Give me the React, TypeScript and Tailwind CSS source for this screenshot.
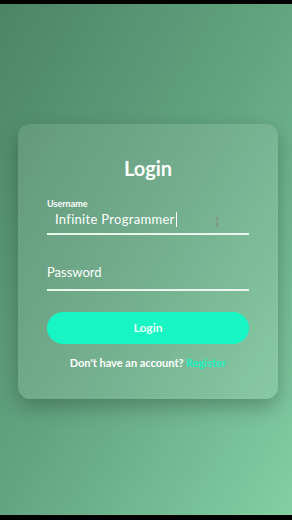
export default function App() {
  return (
    <div className="flex h-[520px] w-[292px] flex-col bg-black" style={{ fontFamily: 'Lato, "Open Sans", sans-serif' }}>
      <div className="h-[4px] shrink-0" />
      <div className="relative flex flex-1 flex-col bg-gradient-to-br from-[#4b8566] via-[#63a581] to-[#84cfa4] pt-[120px]">
        {/* Login card */}
        <div className="ml-[18px] h-[275px] w-[260px] rounded-[12px] bg-white/10 px-[29px] pt-[32px] shadow-[0_8px_20px_rgba(0,0,0,0.25)]">
          <h1 className="text-center text-[20px] font-bold leading-[24px] text-white">Login</h1>

          <div className="relative mt-[18px]">
            <div className="text-[9px] font-bold leading-[12px] text-white">Username</div>
            <div className="flex items-center border-b-2 border-[#e8f6ee] pb-[5px] pl-[8px]">
              <span className="text-[13px] leading-[18px] tracking-[0.3px] text-white">Infinite Programmer</span>
              <span className="ml-[1px] h-[15px] w-[1px] bg-white" />
            </div>
            <svg className="absolute left-[167px] top-[19px]" width="6" height="10" viewBox="0 0 6 10">
              <path d="M1 1h4M3 1v8M1 9h4" stroke="#7b8c84" strokeWidth="1" fill="none" />
            </svg>
          </div>

          <div className="mt-[24px] border-b-2 border-[#e8f6ee] pb-[6px]">
            <span className="text-[13px] leading-[18px] text-white">Password</span>
          </div>

          <button className="mt-[21px] flex h-[32px] w-full items-center justify-center rounded-full bg-[#17f5c4] text-[12px] font-bold text-[#e6fff8]">
            Login
          </button>

          <p className="mt-[12px] text-center text-[11px] font-bold leading-[14px] text-white">
            Don't have an account? <span className="text-[#1ff0c0]">Register</span>
          </p>
        </div>
      </div>
      <div className="h-[5px] shrink-0" />
    </div>
  );
}
